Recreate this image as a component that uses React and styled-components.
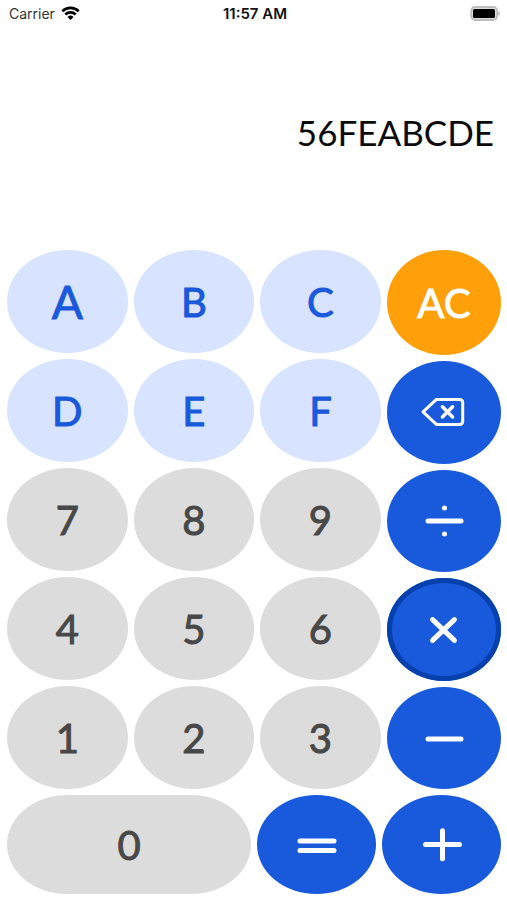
import React, { useState } from 'react';
import styled, { createGlobalStyle } from 'styled-components';

const GlobalStyle = createGlobalStyle`
  * {
    box-sizing: border-box;
  }
  body {
    margin: 0;
    background: #fff;
  }
`;

const Screen = styled.main`
  display: flex;
  flex-direction: column;
  min-height: 100vh;
`;

const StatusBar = styled.header`
  display: grid;
  grid-template-columns: 1fr auto 1fr;
  align-items: center;
  height: 26px;
  padding: 0 6px 0 9px;
  color: #111;
  font-family: Inter, sans-serif;
  font-size: 14px;
`;

const Carrier = styled.div`
  display: flex;
  align-items: center;
  gap: 6px;
  color: #333;
`;

const Time = styled.time`
  font-size: 15px;
  font-weight: 600;
`;

const Battery = styled.div`
  display: flex;
  justify-content: flex-end;
`;

const Display = styled.output`
  flex: 1;
  display: flex;
  align-items: center;
  justify-content: flex-end;
  min-height: 120px;
  padding: 0 13px 12px;
  color: #0b0b0b;
  font-family: Lato, sans-serif;
  font-size: 35px;
  line-height: 44px;
`;

const Keypad = styled.section`
  display: grid;
  gap: 6px;
  padding: 0 6px 6px 7px;
`;

const Upper = styled.div`
  display: grid;
  grid-template-columns: 373fr 114fr;
  gap: 6px;
`;

const Pad = styled.div`
  display: grid;
  grid-template-columns: repeat(3, 1fr);
  grid-auto-rows: 103px;
  gap: 6px;
`;

const Side = styled.div`
  display: grid;
  grid-template-rows: 105px repeat(4, 1fr);
  gap: 6px;
`;

const Bottom = styled.div`
  display: grid;
  grid-template-columns: 244fr 119fr 119fr;
  grid-auto-rows: 99px;
  gap: 6px;
`;

const Key = styled.button`
  display: flex;
  align-items: center;
  justify-content: center;
  padding: 0;
  border: 0;
  border-radius: 50%;
  font-family: Lato, sans-serif;
  font-weight: 400;
  font-size: ${(props) => (props.$large ? '46px' : '40px')};
  line-height: 48px;
  -webkit-text-stroke: 1px currentColor;
  cursor: pointer;
`;

const LetterKey = styled(Key)`
  background: #d7e3ff;
  color: #1959dc;
`;

const NumberKey = styled(Key)`
  background: #dcdcdc;
  color: #484848;
  border-radius: ${(props) => (props.$wide ? '60px / 50%' : '50%')};
`;

const ClearKey = styled(Key)`
  background: #ff9f0a;
  color: #fff;
`;

const OperatorKey = styled(Key)`
  background: #1959dc;
  color: #fff;
  box-shadow: ${(props) => (props.$active ? 'inset 0 0 0 5px #0640ac' : 'none')};
`;

const Icon = styled.svg`
  display: block;
  fill: none;
  stroke: currentColor;
  stroke-width: 5;
  stroke-linecap: round;
  stroke-linejoin: round;
`;

const WifiIcon = () => (
  <svg width="19" height="15" viewBox="0 0 19 15" aria-hidden="true">
    <g fill="none" stroke="#000" strokeWidth="2.6">
      <path d="M1.3 5.2a11.8 11.8 0 0 1 16.4 0" />
      <path d="M4.3 8.5a7.5 7.5 0 0 1 10.4 0" />
    </g>
    <path d="M9.5 14 6.5 11a4.3 4.3 0 0 1 6 0z" fill="#000" />
  </svg>
);

const BatteryIcon = () => (
  <svg width="31" height="16" viewBox="0 0 31 16" aria-hidden="true">
    <rect x="1.2" y="2" width="26" height="13" rx="4" fill="#ddd" stroke="#bdbdbd" strokeWidth="1.8" />
    <rect x="3" y="4" width="22" height="9" rx="1.5" fill="#000" />
    <path d="M28.3 6.2c2.4.6 2.4 4 0 4.6z" fill="#bdbdbd" />
  </svg>
);

const BackspaceIcon = () => (
  <Icon width="48" height="30" viewBox="0 0 48 30">
    <path
      d="M16.4 2.4H39.5q3.2 0 3.2 3.2v18.6q0 3.2-3.2 3.2H16.4L3 14.9z"
      strokeWidth="3"
    />
    <path d="M22.4 9.8 32.6 20M32.6 9.8 22.4 20" strokeWidth="3.4" />
  </Icon>
);

const DivideIcon = () => (
  <Icon width="40" height="34" viewBox="0 0 40 34">
    <path d="M4 17h33" />
    <path d="M20.5 4v.1M20.5 30v.1" />
  </Icon>
);

const TimesIcon = () => (
  <Icon width="34" height="34" viewBox="0 0 34 34">
    <path d="M5.6 7.6 27.4 28.4M27.4 7.6 5.6 28.4" />
  </Icon>
);

const MinusIcon = () => (
  <Icon width="40" height="34" viewBox="0 0 40 34">
    <path d="M4 18h33" />
  </Icon>
);

const EqualsIcon = () => (
  <Icon width="42" height="34" viewBox="0 0 42 34">
    <path d="M4 13h34M4 22.4h34" />
  </Icon>
);

const PlusIcon = () => (
  <Icon width="42" height="36" viewBox="0 0 42 36">
    <path d="M4.5 17.5h34M21.5 3.7v28" />
  </Icon>
);

const hexKeys = ['A', 'B', 'C', 'D', 'E', 'F'];
const numberKeys = ['7', '8', '9', '4', '5', '6', '1', '2', '3'];

const operators = [
  { id: 'divide', Glyph: DivideIcon },
  { id: 'multiply', Glyph: TimesIcon },
  { id: 'subtract', Glyph: MinusIcon },
];

const App = () => {
  const [value, setValue] = useState('56FEABCDE');
  const [operator, setOperator] = useState('multiply');

  const press = (key) => setValue((prev) => (prev === '0' ? key : prev + key));

  return (
    <Screen>
      <GlobalStyle />
      <StatusBar>
        <Carrier>
          Carrier
          <WifiIcon />
        </Carrier>
        <Time>11:57 AM</Time>
        <Battery>
          <BatteryIcon />
        </Battery>
      </StatusBar>

      <Display>{value}</Display>

      <Keypad>
        <Upper>
          <Pad>
            {hexKeys.map((key) => (
              <LetterKey key={key} $large={key === 'A'} onClick={() => press(key)}>
                {key}
              </LetterKey>
            ))}
            {numberKeys.map((key) => (
              <NumberKey key={key} onClick={() => press(key)}>
                {key}
              </NumberKey>
            ))}
          </Pad>
          <Side>
            <ClearKey onClick={() => setValue('0')}>AC</ClearKey>
            <OperatorKey aria-label="backspace" onClick={() => setValue(value.slice(0, -1) || '0')}>
              <BackspaceIcon />
            </OperatorKey>
            {operators.map(({ id, Glyph }) => (
              <OperatorKey
                key={id}
                aria-label={id}
                $active={operator === id}
                onClick={() => setOperator(id)}
              >
                <Glyph />
              </OperatorKey>
            ))}
          </Side>
        </Upper>
        <Bottom>
          <NumberKey $wide onClick={() => press('0')}>
            0
          </NumberKey>
          <OperatorKey aria-label="equals" onClick={() => setOperator(null)}>
            <EqualsIcon />
          </OperatorKey>
          <OperatorKey
            aria-label="add"
            $active={operator === 'add'}
            onClick={() => setOperator('add')}
          >
            <PlusIcon />
          </OperatorKey>
        </Bottom>
      </Keypad>
    </Screen>
  );
};

export default App;
